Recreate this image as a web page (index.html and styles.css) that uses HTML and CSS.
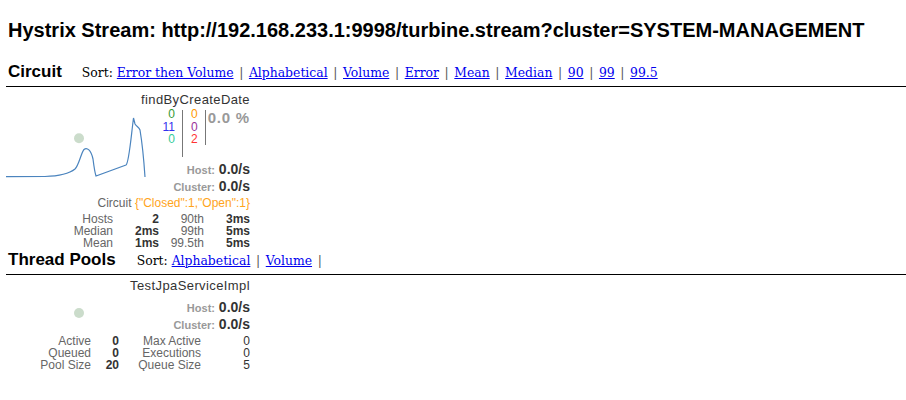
FILE: index.html
```html
<!DOCTYPE html>
<html>
<head>
<meta charset="utf-8">
<link rel="stylesheet" href="styles.css">
</head>
<body>
<h1 class="title">Hystrix Stream: http://192.168.233.1:9998/turbine.stream?cluster=SYSTEM-MANAGEMENT</h1>

<section class="section">
  <div class="menubar">
    <span class="heading">Circuit</span>
    <span class="sort">Sort: <a href="#">Error then Volume</a><span class="sep">|</span><a href="#">Alphabetical</a><span class="sep">|</span><a href="#">Volume</a><span class="sep">|</span><a href="#">Error</a><span class="sep">|</span><a href="#">Mean</a><span class="sep">|</span><a href="#">Median</a><span class="sep">|</span><a href="#">90</a><span class="sep">|</span><a href="#">99</a><span class="sep">|</span><a href="#">99.5</a></span>
  </div>
  <div class="monitor circuit">
    <svg class="chart" width="245" height="100" viewBox="0 0 245 100">
      <circle cx="74" cy="51.3" r="5" class="dot"/>
      <path class="spark" d="M1,89.7 L40,89.5 C55,89 65,86 70,82 C74,78 76,66 79,62.5 C82,60 86,63 88,72 C89,80 90,86 91,89 L121,78 C124,76 126,50 128.5,31 L130,37 C132,40 134,40 135,43 C137,55 139,75 140,90"/>
    </svg>
    <div class="name">findByCreateDate</div>
    <div class="counters">
      <div class="col col1">
        <div class="nums">
          <div class="success">0</div>
          <div class="short">11</div>
          <div class="bad">0</div>
        </div>
      </div>
      <div class="col col2">
        <div class="nums">
          <div class="timeout">0</div>
          <div class="rejected">0</div>
          <div class="failure">2</div>
        </div>
      </div>
      <div class="errpct">0.0 %</div>
    </div>
    <div class="rates">
      <div class="rate"><span class="rlabel">Host:</span> <span class="rval">0.0/s</span></div>
      <div class="rate"><span class="rlabel">Cluster:</span> <span class="rval">0.0/s</span></div>
    </div>
    <div class="status">Circuit <span class="state">{"Closed":1,"Open":1}</span></div>
    <div class="stats circuit-stats">
      <span class="lbl">Hosts</span><span class="val">2</span><span class="lbl">90th</span><span class="val">3ms</span>
      <span class="lbl">Median</span><span class="val">2ms</span><span class="lbl">99th</span><span class="val">5ms</span>
      <span class="lbl">Mean</span><span class="val">1ms</span><span class="lbl">99.5th</span><span class="val">5ms</span>
    </div>
  </div>
</section>

<section class="section">
  <div class="menubar pools">
    <span class="heading">Thread Pools</span>
    <span class="sort">Sort: <a href="#">Alphabetical</a><span class="sep">|</span><a href="#">Volume</a><span class="sep">|</span></span>
  </div>
  <div class="monitor pool">
    <svg class="chart" width="245" height="60" viewBox="0 0 245 60">
      <circle cx="74" cy="38" r="5" class="dot"/>
    </svg>
    <div class="name">TestJpaServiceImpl</div>
    <div class="rates">
      <div class="rate"><span class="rlabel">Host:</span> <span class="rval">0.0/s</span></div>
      <div class="rate"><span class="rlabel">Cluster:</span> <span class="rval">0.0/s</span></div>
    </div>
    <div class="stats pool-stats">
      <span class="lbl">Active</span><span class="val">0</span><span class="lbl">Max Active</span><span class="val2">0</span>
      <span class="lbl">Queued</span><span class="val">0</span><span class="lbl">Executions</span><span class="val2">0</span>
      <span class="lbl">Pool Size</span><span class="val">20</span><span class="lbl">Queue Size</span><span class="val2">5</span>
    </div>
  </div>
</section>
</body>
</html>
```

FILE: styles.css
```css
html, body {
  margin: 0;
  padding: 0;
  background: #fff;
}
body {
  font-family: "Liberation Sans", Arial, sans-serif;
  color: #333;
}
.title {
  margin: 18px 0 0 8px;
  font-size: 20px;
  line-height: 24px;
  font-weight: bold;
  color: #000;
}
.menubar {
  display: flex;
  align-items: baseline;
  padding: 0 0 4px 2px;
  border-bottom: 1px solid #000;
  margin-left: 6px;
}
.section:first-of-type .menubar {
  margin-top: 20px;
}
.heading {
  font-size: 17px;
  line-height: 20px;
  font-weight: bold;
  color: #000;
}
.sort {
  margin-left: 20px;
  font-family: "DejaVu Serif", "Liberation Serif", serif;
  font-size: 12.4px;
  color: #000;
}
.pools {
  margin-top: 1px;
}
.pools .sort {
  margin-left: 21px;
}
.sort a {
  color: #0000ee;
}
.sep {
  color: #555;
  margin: 0 5.6px;
}
.monitor {
  position: relative;
  width: 245px;
  margin-left: 5px;
  text-align: right;
}
.chart {
  position: absolute;
  left: 0;
  top: 0;
}
.spark {
  fill: none;
  stroke: #4b84be;
  stroke-width: 1.2;
}
.dot {
  fill: #cbdccb;
}
.name {
  position: relative;
  font-size: 13px;
  line-height: 16px;
  letter-spacing: 0.4px;
  color: #333;
}
.circuit {
  padding-top: 5px;
}
.counters {
  position: relative;
  display: flex;
  justify-content: flex-end;
  align-items: flex-start;
  margin-top: 2px;
  font-size: 12px;
}
.col {
  border-right: 1px solid #777;
  padding-right: 7px;
}
.col1 {
  height: 47px;
}
.col2 {
  height: 35px;
  padding-left: 8px;
}
.nums {
  margin-top: -2px;
  line-height: 12.6px;
}
.errpct {
  font-size: 15px;
  line-height: 15px;
  letter-spacing: 0.8px;
  font-weight: bold;
  color: #999;
  padding-left: 2px;
  margin-top: 0;
}
.success { color: #339933; }
.short { color: #3333ee; }
.bad { color: #33cc99; }
.timeout { color: #ff9900; }
.rejected { color: #993399; }
.failure { color: #ff3333; }
.rates {
  position: relative;
  margin-top: 4px;
}
.rate {
  font-size: 14px;
  line-height: 17px;
  height: 17px;
}
.rlabel {
  font-size: 11px;
  line-height: 1;
  font-weight: bold;
  color: #999;
}
.rval {
  font-size: 14px;
  line-height: 1;
  font-weight: bold;
  color: #333;
}
.status {
  font-size: 12px;
  line-height: 14px;
  color: #666;
  margin-top: 1px;
}
.state {
  color: #ffa41b;
}
.stats {
  display: grid;
  justify-content: end;
  font-size: 12px;
  line-height: 12px;
  text-align: right;
  margin-top: 3px;
}
.circuit-stats {
  grid-template-columns: 60px 46px 45px 46px;
}
.pool-stats {
  grid-template-columns: 60px 28px 82px 49px;
}
.lbl {
  color: #666;
}
.val {
  font-weight: bold;
  color: #333;
}
.val2 {
  color: #333;
}
.pool {
  padding-top: 3px;
}
.pool .rates {
  margin-top: 5px;
}
.pool .stats {
  margin-top: 2px;
}
```
